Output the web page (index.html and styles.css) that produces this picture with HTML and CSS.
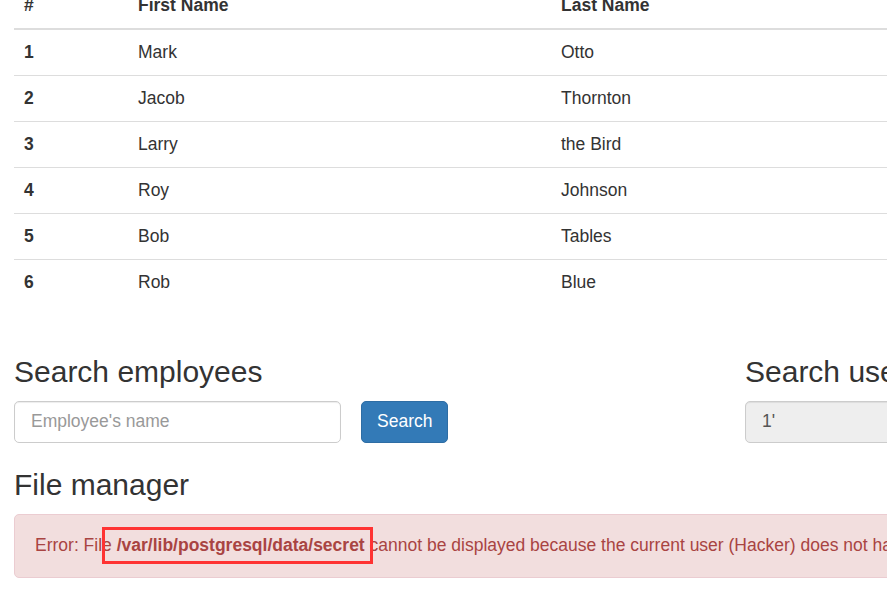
FILE: index.html
```html
<!DOCTYPE html>
<html lang="en">
<head>
<meta charset="utf-8">
<title>Employees</title>
<link rel="stylesheet" href="styles.css">
</head>
<body>
<div class="viewport">
  <div class="container">
    <table class="table">
      <thead>
        <tr><th class="c1">#</th><th class="c2">First Name</th><th class="c3">Last Name</th></tr>
      </thead>
      <tbody>
        <tr><th>1</th><td>Mark</td><td>Otto</td></tr>
        <tr><th>2</th><td>Jacob</td><td>Thornton</td></tr>
        <tr><th>3</th><td>Larry</td><td>the Bird</td></tr>
        <tr><th>4</th><td>Roy</td><td>Johnson</td></tr>
        <tr><th>5</th><td>Bob</td><td>Tables</td></tr>
        <tr><th>6</th><td>Rob</td><td>Blue</td></tr>
      </tbody>
    </table>

    <div class="row">
      <div class="col">
        <h3>Search employees</h3>
        <form class="form-inline">
          <input class="form-control" type="text" placeholder="Employee's name">
          <button class="btn btn-primary" type="button">Search</button>
        </form>
      </div>
      <div class="col">
        <h3>Search users</h3>
        <form class="form-inline">
          <input class="form-control readonly" type="text" value="1'" readonly>
          <button class="btn btn-primary" type="button">Search</button>
        </form>
      </div>
    </div>

    <h3 class="file-title">File manager</h3>
    <div class="alert">
      Error: File <strong>/var/lib/postgresql/data/secret</strong> cannot be displayed because the current user (Hacker) does not have permission to read it.
      <span class="highlight"></span>
    </div>
  </div>
</div>
</body>
</html>
```

FILE: styles.css
```css
html, body {
  margin: 0;
  padding: 0;
  overflow: hidden;
  background: #fff;
}
body {
  font-family: "Liberation Sans", Arial, Helvetica, sans-serif;
  font-size: 17.5px;
  line-height: 25px;
  color: #333;
}
.viewport {
  width: 887px;
  height: 600px;
  overflow: hidden;
}
.container {
  width: 1425px;
  margin-left: 14px;
  margin-top: -17px;
}
.table {
  width: 100%;
  border-collapse: collapse;
  border-spacing: 0;
  margin-bottom: 25px;
}
.table th, .table td {
  padding: 10px;
  text-align: left;
  vertical-align: top;
  line-height: 25px;
}
.table thead th {
  border-bottom: 2px solid #ddd;
  font-weight: bold;
}
.table tbody tr + tr th,
.table tbody tr + tr td {
  border-top: 1px solid #ddd;
}
.table tbody th {
  font-weight: bold;
}
.c1 { width: 94px; }
.c2 { width: 403px; }

.row {
  display: flex;
}
.col {
  width: 731px;
  flex: none;
}
h3 {
  font-size: 30px;
  font-weight: 500;
  line-height: 33px;
  margin: 25px 0 12.5px;
  color: #333;
}
.file-title {
  margin-bottom: 13px;
}
.form-inline {
  display: flex;
  align-items: center;
  gap: 20px;
  margin: 0;
}
.form-control {
  box-sizing: border-box;
  width: 327px;
  height: 42px;
  padding: 7.5px 16px;
  font-family: inherit;
  font-size: 17.5px;
  line-height: 25px;
  color: #555;
  background: #fff;
  border: 1px solid #ccc;
  border-radius: 5px;
  box-shadow: inset 0 1px 1px rgba(0,0,0,.075);
  margin: 0;
}
.form-control::placeholder {
  color: #999;
  opacity: 1;
}
.form-control.readonly {
  background: #eee;
}
.btn {
  box-sizing: border-box;
  height: 42px;
  padding: 7.5px 15px;
  font-family: inherit;
  font-size: 17.5px;
  line-height: 25px;
  border-radius: 5px;
  margin: 0;
  cursor: pointer;
}
.btn-primary {
  color: #fff;
  background: #337ab7;
  border: 1px solid #2e6da4;
}
.alert {
  position: relative;
  padding: 18.75px 20px;
  background: #f2dede;
  border: 1px solid #ebccd1;
  border-radius: 5px;
  color: #a94442;
  white-space: nowrap;
}
.alert strong {
  font-weight: bold;
}
.highlight {
  position: absolute;
  left: 87px;
  top: 12px;
  width: 265px;
  height: 31px;
  border: 3px solid #ff3333;
}
```
